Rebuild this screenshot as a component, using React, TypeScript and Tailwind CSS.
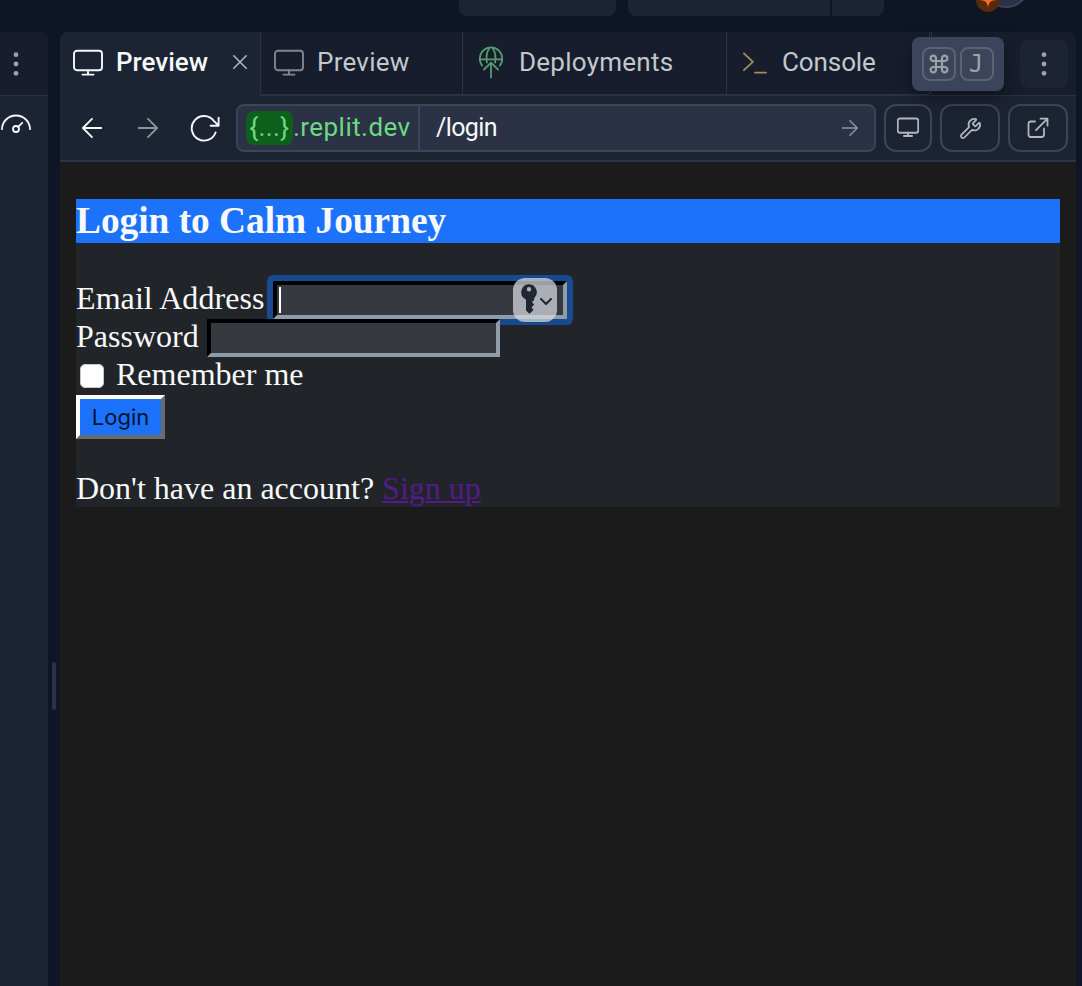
import React from "react";
import { Wrench } from "lucide-react";

function Monitor({ className, stroke = 1.5 }: { className: string; stroke?: number }) {
  return (
    <svg className={className} viewBox="0 0 30 28" fill="none" stroke="currentColor" strokeWidth={stroke} strokeLinecap="round">
      <rect x="1" y="1.8" width="28" height="19.4" rx="3" />
      <path d="M15 21.2v4.4M9.5 25.6h11" />
    </svg>
  );
}

function Dots() {
  return (
    <svg className="h-6 w-6 text-[#9da2a6]" viewBox="0 0 24 24" fill="currentColor">
      <circle cx="12" cy="2.7" r="2.4" />
      <circle cx="12" cy="12" r="2.4" />
      <circle cx="12" cy="21.3" r="2.4" />
    </svg>
  );
}

function Arrow({ className, left = false }: { className: string; left?: boolean }) {
  return (
    <svg className={className} viewBox="0 0 20 20" fill="none" stroke="currentColor" strokeWidth="1.8" strokeLinecap="round" strokeLinejoin="round">
      <path d={left ? "M19.5 10H0.9M10 0.9L0.9 10l9.1 9.1" : "M0.5 10h18.6M10 0.9l9.1 9.1-9.1 9.1"} />
    </svg>
  );
}

function DeployIcon() {
  return (
    <svg className="h-8 w-6 shrink-0 overflow-visible text-[#559b70]" viewBox="0 0 24 32" fill="none" stroke="currentColor" strokeWidth="1.8" strokeLinecap="round" strokeLinejoin="round">
      <path d="M3.2 18.6A11.2 11.2 0 1 1 20.8 18.6M0.8 12.4h22.4M10.2 1.4C7.4 5.4 6.9 9.5 7.9 15.5M13.8 1.4C16.6 5.4 17.1 9.5 16.1 15.5M12 30.5V16.2M5 22.5l7-6.8 7 6.8" />
    </svg>
  );
}

function Tabs() {
  return (
    <div className="flex h-16 rounded-t-lg bg-[#171d2d] text-[26px] text-[#c2c8cc]">
      <div className="flex w-[200px] items-center rounded-tl-lg bg-[#1c2333] pl-[13px] text-[#f5f9fc]">
        <Monitor className="mt-[-2px] h-7 w-[30px]" stroke={1.9} />
        <span className="mt-[-3px] ml-[13px] w-[117px] font-medium">Preview</span>
        <svg className="mt-[-4px] h-[14px] w-[14px] text-[#b5bac0]" viewBox="0 0 14 14" stroke="currentColor" strokeWidth="1.5" strokeLinecap="round">
          <path d="M.8 .8l12.4 12.4M13.2 .8L.8 13.2" />
        </svg>
      </div>
      <div className="flex w-[202px] items-center border-b-2 border-l border-[#2b3245] pl-[13px]">
        <Monitor className="h-7 w-[30px] text-[#81868e]" stroke={1.9} />
        <span className="mt-[-1px] ml-[13px] tracking-[0.25px]">Preview</span>
      </div>
      <div className="flex w-[264px] items-center border-b-2 border-l border-[#2b3245] pl-4">
        <DeployIcon />
        <span className="mt-[-1px] ml-4 tracking-[0.25px]">Deployments</span>
      </div>
      <div className="flex w-[204px] items-center border-x border-b-2 border-[#2b3245] pl-4">
        <svg className="h-[22px] w-6 shrink-0 text-[#9f9058]" viewBox="0 0 24 22" fill="none" stroke="currentColor" strokeWidth="1.8" strokeLinecap="round" strokeLinejoin="round">
          <path d="M.9 1.4l9 8.4-9 8.4M12 20.6h11" />
        </svg>
        <span className="mt-[-1px] ml-[15px] tracking-[-0.1px]">Console</span>
      </div>
      <div className="ml-px flex flex-1 items-center justify-end rounded-tr-lg border-b border-l border-[#2b3245] pr-2">
        <div className="flex h-12 w-12 items-center justify-center rounded-lg bg-[#1c2333]">
          <Dots />
        </div>
      </div>
    </div>
  );
}

function Toolbar() {
  const button = "flex h-12 items-center justify-center rounded-xl border-2 border-[#3c445c] text-[#b2b7bd]";
  return (
    <div className="flex h-[66px] items-start border-b-2 border-[#2b3245] bg-[#1c2333] pt-2 pr-2">
      <div className="flex h-12 w-[176px] items-center pl-[22px]">
        <Arrow left className="h-5 w-5 text-[#f5f9fc]" />
        <Arrow className="ml-9 h-5 w-5 text-[#8e9399]" />
        <svg className="mt-px ml-8 h-[28px] w-[30px] text-[#f5f9fc]" viewBox="0 0 30 28" fill="none" stroke="currentColor" strokeWidth="1.9" strokeLinecap="round" strokeLinejoin="round">
          <path d="M25.6 17.5A12.3 12.3 0 1 1 23.8 5.8L28.6 10.6M28.6 2.8v8h-8" />
        </svg>
      </div>
      <div className="flex h-12 w-[640px] rounded-lg border-2 border-[#3c445c] bg-[#2b3245] text-[26px]">
        <div className="flex w-[182px] shrink-0 items-center border-r-2 border-[#3c445c] pl-2 text-[#6cd980]">
          <span className="flex h-[34px] w-[47px] items-center justify-center rounded-lg bg-[#0e5f1c] pb-0.5 tracking-[0.4px]">{"{...}"}</span>
          <span className="mt-[-2px] tracking-[0.45px]">.replit.dev</span>
        </div>
        <span className="flex flex-1 items-center pl-4 text-[25px] tracking-[-0.6px] text-[#f5f9fc]">/login</span>
        <Arrow className="mt-[14px] mr-4 h-4 w-4 text-[#8e949e]" />
      </div>
      <div className={button + " ml-2 w-12"}><Monitor className="mt-[-1px] h-[21px] w-[22px]" stroke={2.6} /></div>
      <div className={button + " ml-2 w-[60px]"}><Wrench className="h-[23px] w-[23px]" strokeWidth={1.8} /></div>
      <div className={button + " ml-2 w-[60px]"}>
        <svg className="h-5 w-5 overflow-visible" viewBox="0 0 20 20" fill="none" stroke="currentColor" strokeWidth="1.8" strokeLinecap="round" strokeLinejoin="round">
          <path d="M7 3.5H3a2.5 2.5 0 0 0-2.5 2.5v10.5A2.5 2.5 0 0 0 3 19h10.5a2.5 2.5 0 0 0 2.5-2.5v-6M12.5 .7h7v7M19.5 .7L8 12.2" />
        </svg>
      </div>
    </div>
  );
}

function LoginPage() {
  return (
    <div className="flex-1 bg-[#1b1b1b] pt-[37px] pr-4 pl-4 font-['Liberation_Serif',serif] text-[32px] text-[#f8f9fa]">
      <div className="h-[308px] bg-[#212529]">
        <h1 className="h-11 bg-[#1c72fa] text-[37.35px] leading-[44px] font-bold whitespace-nowrap">Login to Calm Journey</h1>
        <form className="mt-[38px]">
          <div className="flex h-[38px] items-start">
            <label className="w-[197px] leading-[35px] tracking-[0.08px] whitespace-nowrap">Email Address</label>
            <div className="-m-1.5 rounded-md bg-[#184a8f] p-1.5">
              <div className="flex h-[38px] w-[294px] border-4 border-t-black border-r-[#8f9ca9] border-b-[#8f9ca9] border-l-black bg-[#363940]">
                <span className="mt-0.5 ml-0.5 h-[26px] w-0.5 bg-white" />
                <div className="relative z-10 mt-[-7px] ml-[232px] flex h-11 w-11 shrink-0 items-center rounded-xl bg-[#d8dce2b8] pl-2 text-[#212732]">
                  <svg className="mt-[-2px] h-[30px] w-4" viewBox="0 0 16 30">
                    <path fill="currentColor" fillRule="evenodd" d="M8 .3a8 8 0 0 0-3 15.3V26.5L8.5 29.8 12.6 26 10.5 23.5 13.2 20.6 11 18.3 13.2 15.8V14.2A8 8 0 0 0 8 .3ZM8 3a2.2 2.2 0 1 1 0 4.4A2.2 2.2 0 0 1 8 3Z" />
                  </svg>
                  <svg className="mt-0.5 ml-[3px] h-[7px] w-3" viewBox="0 0 12 7" fill="none" stroke="currentColor" strokeWidth="2" strokeLinecap="round" strokeLinejoin="round">
                    <path d="M1 1l5 5 5-5" />
                  </svg>
                </div>
              </div>
            </div>
          </div>
          <div className="relative flex h-[38px]">
            <label className="w-[131px] leading-[35px] whitespace-nowrap">Password</label>
            <div className="h-[38px] w-[293px] border-4 border-t-black border-r-[#8f9ca9] border-b-[#8f9ca9] border-l-black bg-[#363940]" />
          </div>
          <div className="flex h-[38px] items-start pl-1">
            <span className="mt-[7px] h-6 w-6 rounded-[5px] border border-[#c9c9c9] bg-white" />
            <label className="ml-3 leading-[35px]">Remember me</label>
          </div>
          <button type="button" className="flex h-11 w-[89px] items-center justify-center border-4 border-t-white border-r-[#6b6b6b] border-b-[#6b6b6b] border-l-white bg-[#1c72fa] font-['Inter',sans-serif] text-[22px] text-[#071330]">Login</button>
        </form>
        <p className="mt-[31px] leading-9">Don't have an account? <a className="text-[#551a8b] underline decoration-2 underline-offset-2">Sign up</a></p>
      </div>
    </div>
  );
}

export default function App() {
  return (
    <div className="relative flex h-[986px] w-[1082px] flex-col overflow-hidden bg-[#0e1525] font-['Roboto',sans-serif]">
      <div className="flex h-8 shrink-0 items-start pl-[459px]">
        <div className="h-4 w-[157px] rounded-b-lg bg-[#1c2333]" />
        <div className="ml-3 h-4 w-[202px] rounded-bl-lg bg-[#1c2333]" />
        <div className="ml-0.5 h-4 w-[52px] rounded-br-lg bg-[#1c2333]" />
        <div className="relative mt-[-40px] ml-[98px] h-12 w-12 rounded-full border-2 border-[#3c445c] bg-[#2b3245]">
          <svg className="absolute top-[26px] left-[-8px] h-6 w-6" viewBox="0 0 24 24">
            <circle cx="12" cy="12" r="12" fill="#572a0b" />
            <path d="M12 2c.8 7 3 9.5 9 10-6 .3-8.2 1.5-9 8-.8-6.5-3-7.7-9-8 6-.5 8.2-3 9-10Z" fill="#ff6a28" />
          </svg>
        </div>
      </div>
      <div className="flex flex-1">
        <aside className="flex w-12 flex-col rounded-tr-lg bg-[#1c2333]">
          <div className="flex h-16 items-center rounded-tr-lg border-b border-[#2b3245] bg-[#171d2d] pl-1"><Dots /></div>
          <svg className="mt-[18px] ml-px h-5 w-[31px] text-[#f5f9fc]" viewBox="0 0 31 20" fill="none" stroke="currentColor" strokeWidth="1.8" strokeLinecap="round">
            <path d="M1 15.2a14 13.7 0 0 1 28 0M17.2 12.8l4-4" />
            <circle cx="15" cy="15" r="3" />
          </svg>
        </aside>
        <div className="flex w-3 justify-center pt-[630px]"><div className="h-12 w-1 rounded-full bg-[#2b3245]" /></div>
        <main className="flex w-[1016px] flex-col">
          <Tabs />
          <Toolbar />
          <LoginPage />
        </main>
      </div>
      <div className="absolute top-[37px] left-[912px] flex h-[54px] w-[92px] items-center justify-center gap-1 rounded-lg bg-[#3c445c] text-[#9da2a6] shadow-[0_8px_20px_rgba(2,2,3,0.35)]">
        <kbd className="flex h-[34px] w-[34px] items-center justify-center rounded-lg border-2 border-[#5c6370]">
          <svg className="h-5 w-5" viewBox="0 0 20 20" fill="none" stroke="currentColor" strokeWidth="2.2">
            <path d="M7 7V4.5A2.7 2.7 0 1 0 4.5 7h11A2.7 2.7 0 1 0 13 4.5v11A2.7 2.7 0 1 0 15.5 13h-11A2.7 2.7 0 1 0 7 15.5V7" />
          </svg>
        </kbd>
        <kbd className="flex h-[34px] w-[34px] items-center justify-center rounded-lg border-2 border-[#5c6370] pr-0.5 font-['DejaVu_Sans_Mono',monospace] text-[24px]">J</kbd>
      </div>
    </div>
  );
}
